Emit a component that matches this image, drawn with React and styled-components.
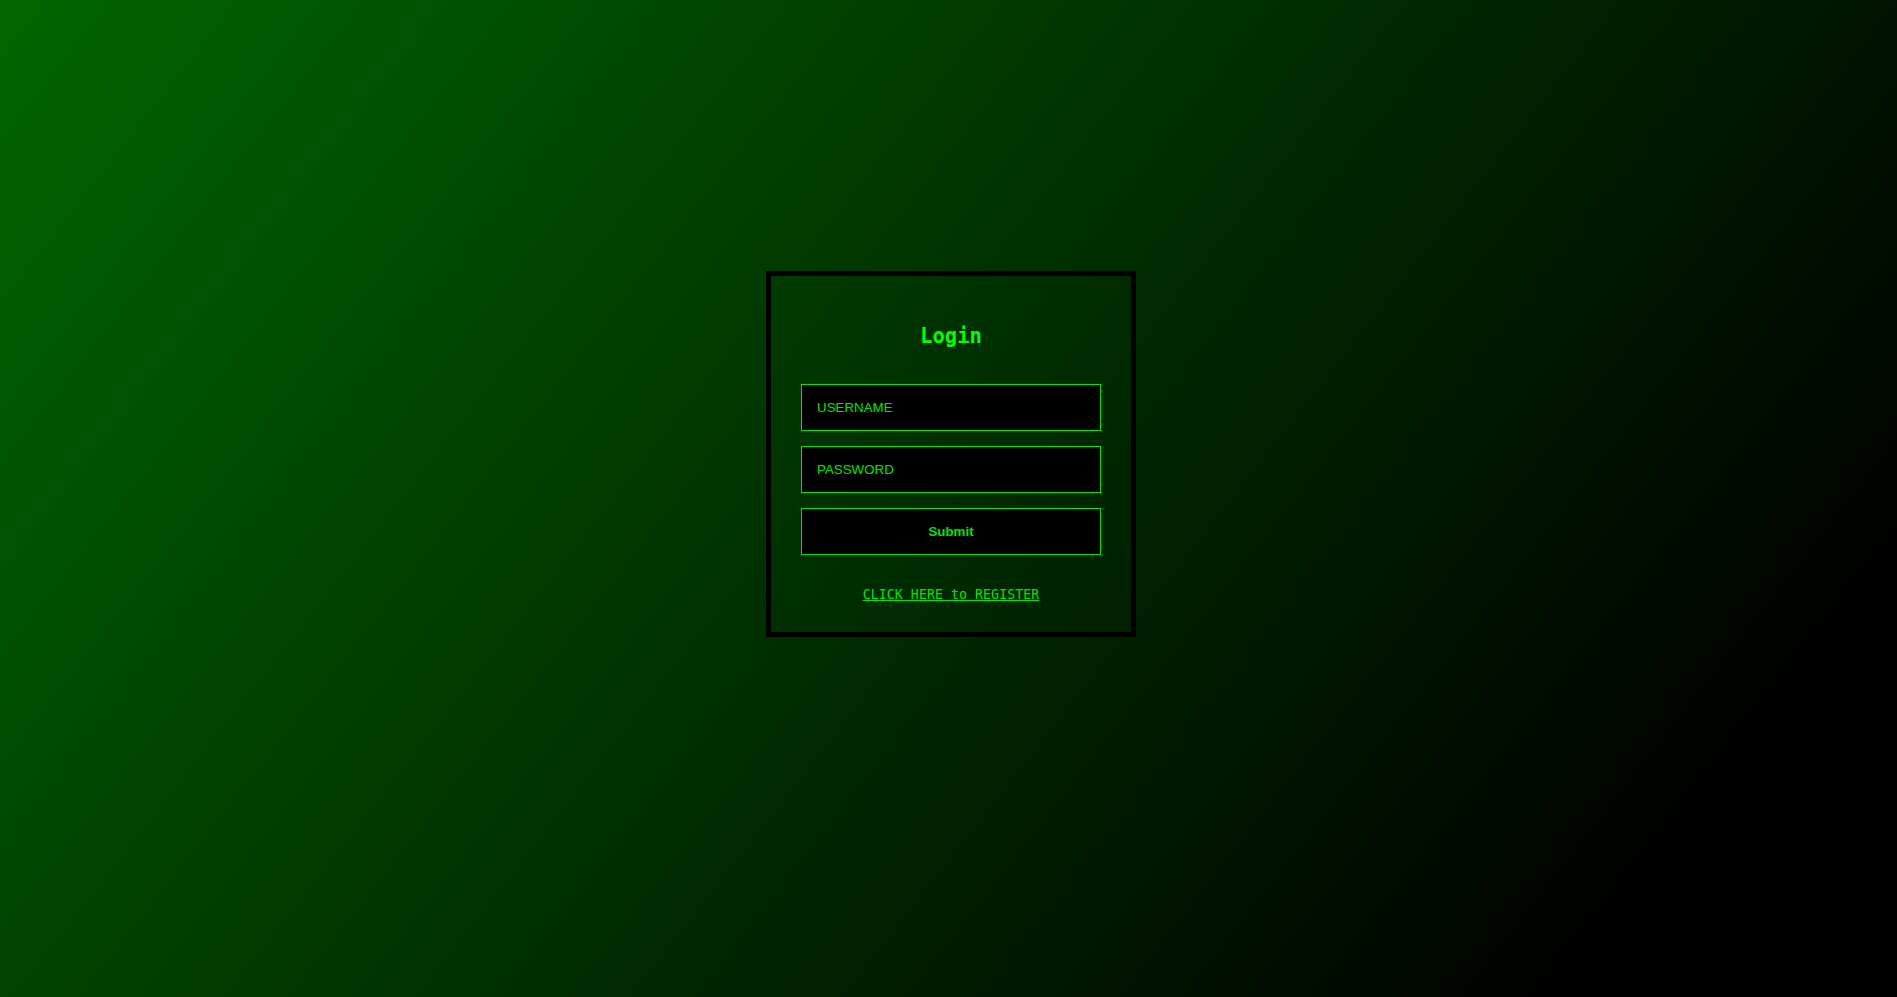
import React from 'react';
import styled, { createGlobalStyle } from 'styled-components';

const GlobalStyle = createGlobalStyle`
    html, body {
        margin: 0;
        padding: 0;
        height: 100%;
    }

    body {
        font-family: "DejaVu Sans Mono", monospace;
    }
`;

const Page = styled.div`
    min-height: 100vh;
    box-sizing: border-box;
    display: flex;
    justify-content: center;
    align-items: flex-start;
    padding: 271px 0 0 5px;
    background: linear-gradient(128deg, #006600 0%, #000000 88%);
`;

const Card = styled.form`
    width: 370px;
    box-sizing: border-box;
    border: 5px solid #000;
    padding: 48px 30px 29px;
    display: flex;
    flex-direction: column;
    align-items: stretch;
`;

const Title = styled.h2`
    margin: 0 0 36px;
    text-align: center;
    font-family: "DejaVu Sans Mono", monospace;
    font-size: 20.5px;
    line-height: 24px;
    font-weight: bold;
    color: #00ff00;
`;

const Field = styled.input`
    height: 47px;
    box-sizing: border-box;
    margin-bottom: 15px;
    padding: 0 15px;
    background: #000;
    border: 1px solid #00e600;
    outline: none;
    color: #00ff00;
    font-family: "Liberation Sans", Arial, sans-serif;
    font-size: 13.333px;

    &::placeholder {
        color: #00e600;
        opacity: 1;
    }
`;

const SubmitButton = styled.button`
    height: 47px;
    background: #000;
    border: 1px solid #00e600;
    color: #00e600;
    font-family: "Liberation Sans", Arial, sans-serif;
    font-size: 13.333px;
    font-weight: bold;
    cursor: pointer;
`;

const RegisterLink = styled.a`
    margin-top: 32px;
    align-self: center;
    font-family: "DejaVu Sans Mono", monospace;
    font-size: 13.333px;
    line-height: 16px;
    color: #00e600;
    text-decoration: underline;
    cursor: pointer;
`;

const App = () => {
    return (
        <>
            <GlobalStyle />
            <Page>
                <Card onSubmit={(e) => e.preventDefault()}>
                    <Title>Login</Title>
                    <Field type="text" placeholder="USERNAME" />
                    <Field type="password" placeholder="PASSWORD" />
                    <SubmitButton type="submit">Submit</SubmitButton>
                    <RegisterLink>CLICK HERE to REGISTER</RegisterLink>
                </Card>
            </Page>
        </>
    );
};

export default App;
